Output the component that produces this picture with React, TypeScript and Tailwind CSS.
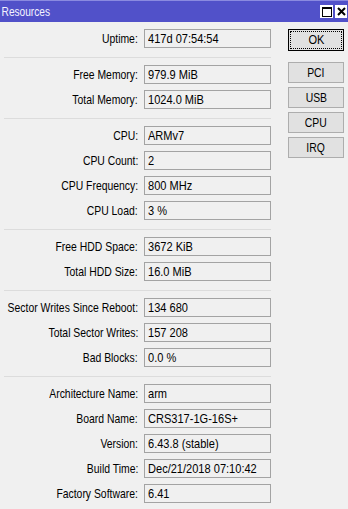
import React from "react";

type Row = { label: string; value: string };

const groups: Row[][] = [
  [{ label: "Uptime:", value: "417d 07:54:54" }],
  [
    { label: "Free Memory:", value: "979.9 MiB" },
    { label: "Total Memory:", value: "1024.0 MiB" },
  ],
  [
    { label: "CPU:", value: "ARMv7" },
    { label: "CPU Count:", value: "2" },
    { label: "CPU Frequency:", value: "800 MHz" },
    { label: "CPU Load:", value: "3 %" },
  ],
  [
    { label: "Free HDD Space:", value: "3672 KiB" },
    { label: "Total HDD Size:", value: "16.0 MiB" },
  ],
  [
    { label: "Sector Writes Since Reboot:", value: "134 680" },
    { label: "Total Sector Writes:", value: "157 208" },
    { label: "Bad Blocks:", value: "0.0 %" },
  ],
  [
    { label: "Architecture Name:", value: "arm" },
    { label: "Board Name:", value: "CRS317-1G-16S+" },
    { label: "Version:", value: "6.43.8 (stable)" },
    { label: "Build Time:", value: "Dec/21/2018 07:10:42" },
    { label: "Factory Software:", value: "6.41" },
  ],
];

// the original dialog font is a narrow one, squeeze Liberation Sans to match
const Field = ({ label, value }: Row) => (
  <div className="flex items-center h-[19px]">
    <div className="w-[138px] flex justify-end whitespace-nowrap">
      <span className="inline-block origin-right scale-x-[0.8]">{label}</span>
    </div>
    <div className="ml-[6px] w-[127px] h-[19px] border border-[#a3a3a3] bg-[#f0f0f0] pl-[3px] leading-[17px] whitespace-nowrap overflow-hidden">
      <span className="inline-block origin-left scale-x-[0.85]">{value}</span>
    </div>
  </div>
);

const SideButton = ({ text }: { text: string }) => (
  <div className="w-[56px] h-[21px] border border-[#adadad] bg-[#e1e1e1] flex items-center justify-center">
    <span className="inline-block scale-x-[0.8]">{text}</span>
  </div>
);

export default function App() {
  return (
    <div
      className="w-[348px] h-[509px] bg-[#f0f0f0] text-black text-[13px] overflow-hidden"
      style={{ fontFamily: '"Liberation Sans", Arial, sans-serif' }}
    >
      <div className="h-[22px] bg-[#5151c9] border-t border-[#8a8ae0] flex items-center justify-between">
        <span className="pl-[2px] inline-block origin-left scale-x-[0.78] text-[#f4f4ff]">Resources</span>
        <div className="flex items-center gap-[2px] pr-[1px]">
          <div className="w-[13px] h-[13px] bg-white flex items-center justify-center">
            <div className="w-[10px] h-[10px] border border-black border-t-2" />
          </div>
          <div className="w-[12px] h-[13px] bg-white flex items-center justify-center">
            <svg width="9" height="9" viewBox="0 0 9 9">
              <path d="M1 1 L8 8 M8 1 L1 8" stroke="black" strokeWidth="2" />
            </svg>
          </div>
        </div>
      </div>

      <div className="flex">
        <div className="w-[272px] pt-[7px]">
          {groups.map((g, gi) => (
            <div key={gi}>
              {gi > 0 && <div className="ml-[4px] mt-[9px] mb-[7px] h-px w-[267px] bg-[#dcdcdc]" />}
              <div className="flex flex-col gap-[6px]">
                {g.map((r) => (
                  <Field key={r.label} {...r} />
                ))}
              </div>
            </div>
          ))}
        </div>

        <div className="ml-[16px] pt-[7px] flex flex-col">
          <div className="w-[56px] h-[22px] border border-black bg-[#e1e1e1] p-[1px]">
            <div className="w-full h-full border border-dotted border-black flex items-center justify-center">
              <span className="inline-block scale-x-[0.85]">OK</span>
            </div>
          </div>
          <div className="mt-[11px] flex flex-col gap-[4px]">
            <SideButton text="PCI" />
            <SideButton text="USB" />
            <SideButton text="CPU" />
            <SideButton text="IRQ" />
          </div>
        </div>
      </div>
    </div>
  );
}
